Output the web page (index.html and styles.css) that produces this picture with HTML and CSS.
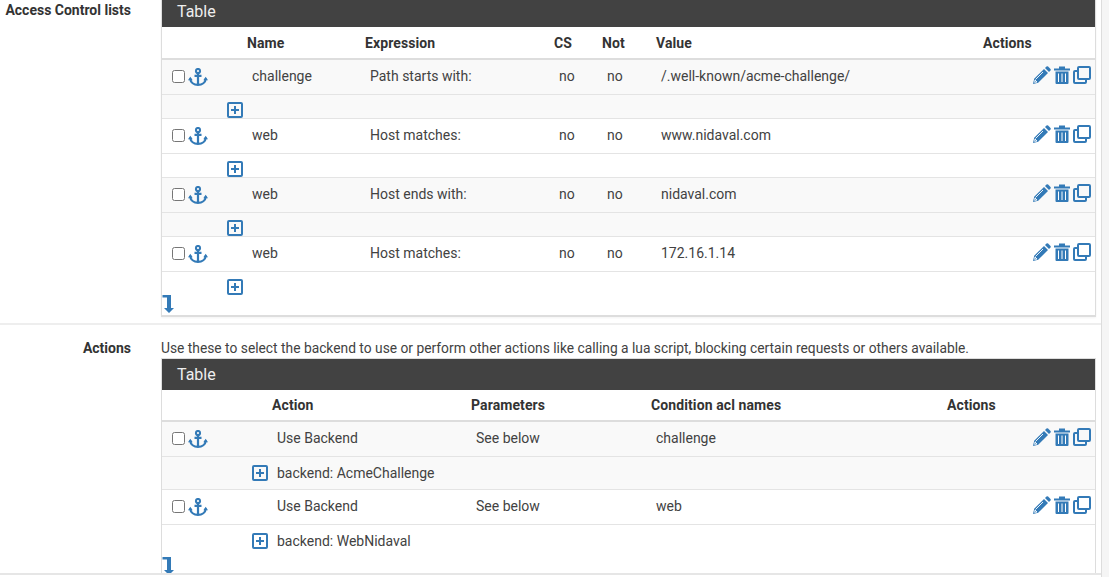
FILE: index.html
```html
<!DOCTYPE html>
<html lang="en">
<head>
  <meta charset="UTF-8">
  <meta name="viewport" content="width=device-width, initial-scale=1.0">
  <title>HAProxy Frontend</title>
  <link rel="stylesheet" href="styles.css">
</head>
<body>
  <svg class="sprites" xmlns="http://www.w3.org/2000/svg">
    <symbol id="i-anchor" viewBox="0 0 20 18">
      <circle cx="10" cy="3" r="2.1" fill="none" stroke="currentColor" stroke-width="2"/>
      <path d="M10 5v12M6.500 7.800h7" fill="none" stroke="currentColor" stroke-width="2.200"/>
      <path d="M2.200 10.500C2.500 14.500 6 16.800 10 16.800s7.500-2.300 7.800-6.300" fill="none" stroke="currentColor" stroke-width="2.300"/>
      <path d="M0 12.300l2.300-3.500 2.400 3.500zM15.300 12.300l2.400-3.500L20 12.300z" fill="currentColor"/>
    </symbol>
    <symbol id="i-plus" viewBox="0 0 16 16">
      <rect x="1" y="1" width="14" height="14" rx="1" fill="none" stroke="currentColor" stroke-width="2"/>
      <path d="M8 4v8M4 8h8" fill="none" stroke="currentColor" stroke-width="2"/>
    </symbol>
    <symbol id="i-pencil" viewBox="0 0 18 18">
      <path d="M1.200 12.800L11 3l4 4-9.800 9.800L0 18z" fill="currentColor"/>
      <path d="M12 2l1.500-1.500q.8-.6 1.600 0l2.400 2.400q.6.800 0 1.600L16 6z" fill="currentColor"/>
      <path d="M2.500 13.500L10 6M2 14l2 2-2.300.4z" fill="none" stroke="#fff" stroke-width=".9"/>
    </symbol>
    <symbol id="i-trash" viewBox="0 0 16 18">
      <path d="M0 2.500h5V.5h6v2h5V4.500H0zM1.500 5.500h13V17q0 1-1 1h-11q-1 0-1-1z" fill="currentColor"/>
      <path d="M4.500 7.500V16M8 7.500V16M11.500 7.500V16" fill="none" stroke="#fff" stroke-width="1"/>
    </symbol>
    <symbol id="i-clone" viewBox="0 0 18 18">
      <rect x="5" y="1" width="12" height="12" rx="1" fill="none" stroke="currentColor" stroke-width="2"/>
      <path d="M5 5H2q-1 0-1 1v10q0 1 1 1h10q1 0 1-1v-3" fill="none" stroke="currentColor" stroke-width="2"/>
    </symbol>
    <symbol id="i-move" viewBox="0 0 12 18">
      <path d="M.5 0H9v13h3l-5 5-5-5h3V2.500H.5z" fill="currentColor"/>
    </symbol>
  </svg>

  <main class="page">
    <section class="form-row form-row-acl">
      <div class="form-label">Access Control lists</div>
      <div class="form-field">
        <div class="panel panel-first">
          <div class="panel-heading">Table</div>
          <table class="grid grid-acl">
            <colgroup>
              <col class="c-77"><col class="c-118"><col class="c-189"><col class="c-48"><col class="c-54"><col class="c-327"><col>
            </colgroup>
            <thead>
              <tr><th></th><th>Name</th><th>Expression</th><th>CS</th><th>Not</th><th>Value</th><th>Actions</th></tr>
            </thead>
            <tbody>
              <tr class="main-row">
                <td class="select"><input type="checkbox"><svg class="icon anchor"><use href="#i-anchor"/></svg></td>
                <td>challenge</td><td>Path starts with:</td><td>no</td><td>no</td><td>/.well-known/acme-challenge/</td>
                <td class="row-actions"><svg class="icon pencil"><use href="#i-pencil"/></svg><svg class="icon trash"><use href="#i-trash"/></svg><svg class="icon clone"><use href="#i-clone"/></svg></td>
              </tr>
              <tr class="sub-row"><td class="toggle"><svg class="icon plus"><use href="#i-plus"/></svg></td><td colspan="6"></td></tr>
            </tbody>
            <tbody>
              <tr class="main-row">
                <td class="select"><input type="checkbox"><svg class="icon anchor"><use href="#i-anchor"/></svg></td>
                <td>web</td><td>Host matches:</td><td>no</td><td>no</td><td>www.nidaval.com</td>
                <td class="row-actions"><svg class="icon pencil"><use href="#i-pencil"/></svg><svg class="icon trash"><use href="#i-trash"/></svg><svg class="icon clone"><use href="#i-clone"/></svg></td>
              </tr>
              <tr class="sub-row"><td class="toggle"><svg class="icon plus"><use href="#i-plus"/></svg></td><td colspan="6"></td></tr>
            </tbody>
            <tbody>
              <tr class="main-row">
                <td class="select"><input type="checkbox"><svg class="icon anchor"><use href="#i-anchor"/></svg></td>
                <td>web</td><td>Host ends with:</td><td>no</td><td>no</td><td>nidaval.com</td>
                <td class="row-actions"><svg class="icon pencil"><use href="#i-pencil"/></svg><svg class="icon trash"><use href="#i-trash"/></svg><svg class="icon clone"><use href="#i-clone"/></svg></td>
              </tr>
              <tr class="sub-row"><td class="toggle"><svg class="icon plus"><use href="#i-plus"/></svg></td><td colspan="6"></td></tr>
            </tbody>
            <tbody>
              <tr class="main-row">
                <td class="select"><input type="checkbox"><svg class="icon anchor"><use href="#i-anchor"/></svg></td>
                <td>web</td><td>Host matches:</td><td>no</td><td>no</td><td>172.16.1.14</td>
                <td class="row-actions"><svg class="icon pencil"><use href="#i-pencil"/></svg><svg class="icon trash"><use href="#i-trash"/></svg><svg class="icon clone"><use href="#i-clone"/></svg></td>
              </tr>
              <tr class="sub-row last"><td class="toggle"><svg class="icon plus"><use href="#i-plus"/></svg></td><td colspan="6"></td></tr>
            </tbody>
          </table>
          <div class="move-row"><svg class="icon move"><use href="#i-move"/></svg></div>
        </div>
      </div>
    </section>

    <section class="form-row form-row-actions">
      <div class="form-label">Actions</div>
      <div class="form-field">
        <p class="help">Use these to select the backend to use or perform other actions like calling a lua script, blocking certain requests or others available.</p>
        <div class="panel panel-clipped">
          <div class="panel-heading">Table</div>
          <table class="grid grid-actions">
            <colgroup>
              <col class="c-102"><col class="c-199"><col class="c-180"><col class="c-296"><col>
            </colgroup>
            <thead>
              <tr><th></th><th>Action</th><th>Parameters</th><th>Condition acl names</th><th>Actions</th></tr>
            </thead>
            <tbody>
              <tr class="main-row">
                <td class="select"><input type="checkbox"><svg class="icon anchor"><use href="#i-anchor"/></svg></td>
                <td>Use Backend</td><td>See below</td><td>challenge</td>
                <td class="row-actions"><svg class="icon pencil"><use href="#i-pencil"/></svg><svg class="icon trash"><use href="#i-trash"/></svg><svg class="icon clone"><use href="#i-clone"/></svg></td>
              </tr>
              <tr class="sub-row"><td class="toggle"><svg class="icon plus"><use href="#i-plus"/></svg></td><td colspan="4">backend: AcmeChallenge</td></tr>
            </tbody>
            <tbody>
              <tr class="main-row">
                <td class="select"><input type="checkbox"><svg class="icon anchor"><use href="#i-anchor"/></svg></td>
                <td>Use Backend</td><td>See below</td><td>web</td>
                <td class="row-actions"><svg class="icon pencil"><use href="#i-pencil"/></svg><svg class="icon trash"><use href="#i-trash"/></svg><svg class="icon clone"><use href="#i-clone"/></svg></td>
              </tr>
              <tr class="sub-row last"><td class="toggle"><svg class="icon plus"><use href="#i-plus"/></svg></td><td colspan="4">backend: WebNidaval</td></tr>
            </tbody>
          </table>
          <div class="move-row"><svg class="icon move"><use href="#i-move"/></svg></div>
        </div>
      </div>
    </section>

    <section class="form-row form-row-cut">
      <div class="form-label"></div>
      <div class="form-field">
        <p class="help help-cut">or all rows can be moved with the arrow buttons or by drag and drop. Add button: Hold down to copy, click this to insert.</p>
      </div>
    </section>
  </main>
</body>
</html>
```

FILE: styles.css
```css
html, body {
  height: 100vh;
  margin: 0;
  overflow: hidden;
}
body {
  font-family: Roboto, "Liberation Sans", Arial, sans-serif;
  font-size: 14px;
  line-height: 20px;
  color: #424242;
  background: #f5f5f5;
}
.sprites {
  display: none;
}
.page {
  width: 1101px;
  margin-top: -14px;
  background: #fff;
  border-right: 1px solid #ddd;
}
.form-row {
  display: grid;
  grid-template-columns: 131px 1fr;
  column-gap: 30px;
  padding: 14px 5px 0 0;
  border-bottom: 2px solid #e6e6e6;
}
.form-row-acl {
  padding-bottom: 6px;
  border-bottom-color: #eee;
}
.form-row-actions {
  padding-top: 13px;
}
.form-label {
  font-weight: 700;
  text-align: right;
  color: #333;
}
.help {
  margin: 0;
  font-size: 13.8px;
  white-space: nowrap;
}
.form-row-cut {
  padding-top: 1px;
  border-bottom: 0;
}
.help-cut {
  line-height: 14px;
}

/* panels */
.panel {
  background: #fff;
  border: 1px solid #ddd;
  border-bottom-width: 2px;
  box-shadow: 0 1px 2px rgba(0, 0, 0, 0.05);
}
.panel-first {
  margin-top: -5px;
}
.panel-clipped {
  height: 214px;
  overflow: hidden;
  border-bottom: 0;
  box-shadow: none;
}
.panel-heading {
  height: 31px;
  padding-left: 15px;
  font-size: 16px;
  line-height: 31px;
  color: #eee;
  background: #424242;
}

/* tables */
.grid {
  width: 100%;
  table-layout: fixed;
  border-spacing: 0;
}
.c-48 { width: 48px; }
.c-54 { width: 54px; }
.c-77 { width: 77px; }
.c-102 { width: 102px; }
.c-118 { width: 118px; }
.c-180 { width: 180px; }
.c-189 { width: 189px; }
.c-199 { width: 199px; }
.c-296 { width: 296px; }
.c-327 { width: 327px; }
.grid th {
  height: 31px;
  padding: 0 8px;
  text-align: left;
  font-weight: 700;
  letter-spacing: 0.1px;
  color: #333;
  border-bottom: 2px solid #ddd;
}
.grid-actions th {
  height: 30px;
}
.grid td {
  padding: 0 0 0 13px;
  white-space: nowrap;
  border-bottom: 1px solid #e4e4e4;
}
.grid tbody:nth-of-type(odd) td {
  background: #f9f9f9;
}
.grid .main-row td {
  height: 31px;
  padding-bottom: 3px;
}
.grid .main-row .select {
  height: 33px;
  padding: 0 0 1px 10px;
  line-height: 0;
}
.select input {
  width: 13px;
  height: 13px;
  margin: 0 3px 0 0;
  vertical-align: middle;
}
.grid .main-row .row-actions {
  height: 30px;
  padding: 0 4px 4px 0;
  text-align: right;
  line-height: 0;
}
.grid .toggle {
  padding: 7px 0 0;
}
.grid-actions .toggle {
  padding: 8px 0;
}
.sub-row.last td {
  border-bottom: 0;
}

/* icons */
.icon {
  color: #337ab7;
  vertical-align: middle;
}
.anchor { width: 20px; height: 18px; }
.plus {
  display: block;
  width: 16px;
  height: 16px;
  margin: 0 -4px 0 auto;
}
.pencil { width: 18px; height: 18px; }
.trash { width: 16px; height: 18px; margin-left: 3px; }
.clone { width: 18px; height: 18px; margin-left: 3px; }
.move-row {
  height: 20px;
  line-height: 0;
}
.move {
  width: 12px;
  height: 18px;
  vertical-align: top;
}
```
